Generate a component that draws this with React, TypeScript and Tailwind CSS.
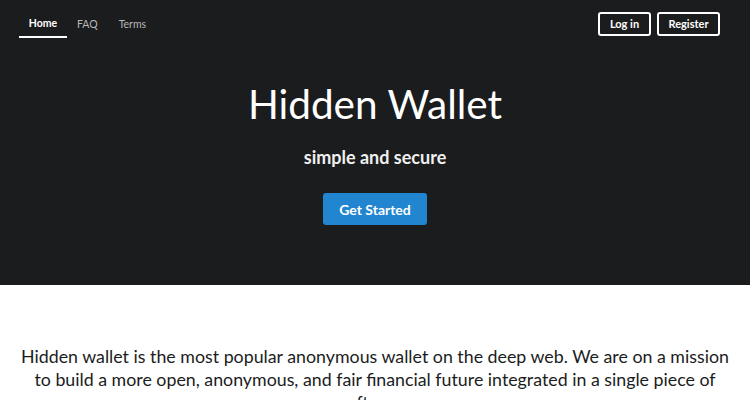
import React from "react";

export default function App() {
  return (
    <div className="w-[750px] min-h-[400px] bg-white" style={{ fontFamily: "Lato, 'Noto Sans', sans-serif" }}>
      <div className="h-[285px] bg-[#1b1c1d] flex flex-col">
        <div className="flex items-start justify-between pl-[19px] pr-[30px] pt-[12px]">
          <div className="flex text-[10.5px]">
            <div className="w-[48px] h-[26px] flex items-center justify-center border-b-2 border-white text-white font-bold">Home</div>
            <div className="h-[26px] flex items-center ml-[10px] text-[#b8b8b8]">FAQ</div>
            <div className="h-[26px] flex items-center ml-[21px] text-[#b8b8b8]">Terms</div>
          </div>
          <div className="flex gap-[6px] text-[11px] font-bold text-white">
            <div className="w-[53px] h-[24px] flex items-center justify-center border-2 border-white rounded-[3px]">Log in</div>
            <div className="w-[63px] h-[24px] flex items-center justify-center border-2 border-white rounded-[3px]">Register</div>
          </div>
        </div>
        <div className="flex flex-col items-center">
          <h1 className="mt-[42px] text-[40.5px] leading-[48px] text-white font-normal">Hidden Wallet</h1>
          <div className="mt-[17px] text-[18px] leading-[24px] font-bold text-[#f0f0f0]">simple and secure</div>
          <button className="mt-[24px] w-[104px] h-[32px] bg-[#2185d0] text-white text-[14px] font-bold rounded-[3px]">Get Started</button>
        </div>
      </div>
      <p className="pt-[60px] px-[14px] text-center text-[17.8px] leading-[23px] text-[#1b1c1d]">
        Hidden wallet is the most popular anonymous wallet on the deep web. We are on a mission to build a more open, anonymous, and fair financial future integrated in a single piece of software.
      </p>
    </div>
  );
}
